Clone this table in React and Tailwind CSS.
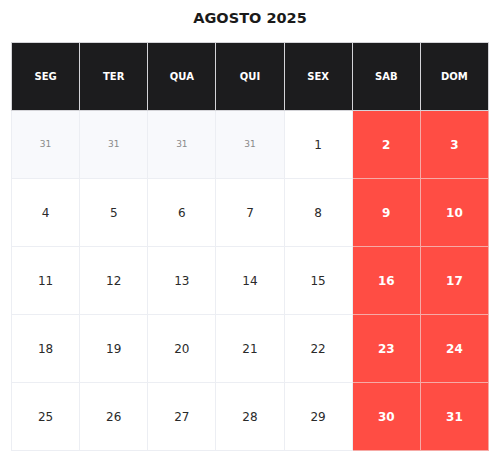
import React from "react";

const days = ["SEG", "TER", "QUA", "QUI", "SEX", "SAB", "DOM"];
const weeks = [
  [31, 31, 31, 31, 1, 2, 3],
  [4, 5, 6, 7, 8, 9, 10],
  [11, 12, 13, 14, 15, 16, 17],
  [18, 19, 20, 21, 22, 23, 24],
  [25, 26, 27, 28, 29, 30, 31],
];

export default function App() {
  return (
    <div
      className="w-[500px] h-[463px] bg-white px-[11px]"
      style={{ fontFamily: '"DejaVu Sans", sans-serif' }}
    >
      <h1 className="h-[42px] pt-[9px] text-center text-[14.5px] font-bold text-[#1a1a1a] leading-[18px]">
        AGOSTO 2025
      </h1>
      <table className="w-[478px] table-fixed border-collapse">
        <thead>
          <tr>
            {days.map((d) => (
              <th
                key={d}
                className="h-[68px] bg-[#1c1c1e] border border-[#d4d4d8] text-white text-[10px] font-bold"
              >
                {d}
              </th>
            ))}
          </tr>
        </thead>
        <tbody>
          {weeks.map((w, wi) => (
            <tr key={wi}>
              {w.map((n, i) => {
                const faded = wi === 0 && i < 4;
                const weekend = i >= 5;
                let cls = "h-[68px] text-center border ";
                if (weekend) {
                  cls += "bg-[#ff4d44] border-[#f6aaa6] text-white font-bold text-[12px]";
                } else if (faded) {
                  cls += "bg-[#f8f9fc] border-[#eceef3] text-[#8a8a8a] text-[9px]";
                } else {
                  cls += "bg-white border-[#eceef3] text-[#2a2a2a] text-[12px]";
                }
                return (
                  <td key={i} className={cls}>
                    {n}
                  </td>
                );
              })}
            </tr>
          ))}
        </tbody>
      </table>
    </div>
  );
}
